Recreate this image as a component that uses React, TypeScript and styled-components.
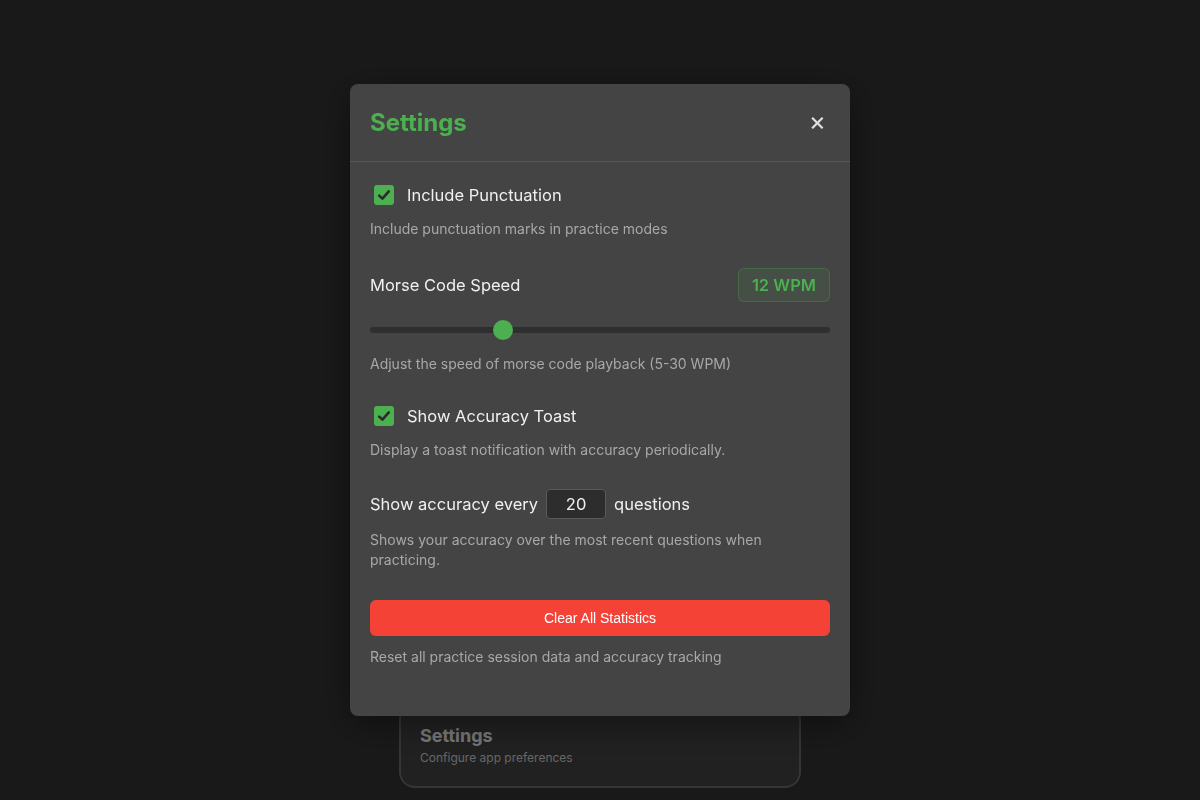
import React from "react";
import styled, { createGlobalStyle } from "styled-components";

const Global = createGlobalStyle`
  html, body { margin: 0; padding: 0; }
  body {
    background: #333333;
    font-family: Inter, "Noto Sans", sans-serif;
    color: #eeeeee;
    width: 1200px;
    height: 800px;
    overflow: hidden;
  }
  * { box-sizing: border-box; }
`;

const Page = styled.div`
  height: 800px;
  display: flex;
  flex-direction: column;
  align-items: center;
  padding-top: 704px;
`;

const MenuCard = styled.div`
  width: 402px;
  background: #424242;
  border: 2px solid #6a6a6a;
  border-radius: 16px;
  padding: 18px 20px 19px 19px;
  display: flex;
  flex-direction: column;
  gap: 1px;
`;

const MenuTitle = styled.div`
  font-size: 18px;
  font-weight: 700;
  line-height: 24px;
  color: #eeeeee;
`;

const MenuSub = styled.div`
  font-size: 12px;
  line-height: 18px;
  color: #cccccc;
`;

const Overlay = styled.div`
  position: fixed;
  inset: 0;
  background: rgba(0, 0, 0, 0.5);
  display: flex;
  justify-content: center;
  align-items: flex-start;
  padding-top: 84px;
`;

const Modal = styled.div`
  width: 500px;
  background: #444444;
  border-radius: 8px;
  box-shadow: 0 8px 32px rgba(0, 0, 0, 0.4);
  display: flex;
  flex-direction: column;
`;

const Header = styled.div`
  display: flex;
  align-items: center;
  justify-content: space-between;
  padding: 20px 20px 19px 20px;
  border-bottom: 1px solid #575757;
`;

const Title = styled.h2`
  margin: 0;
  font-size: 24px;
  line-height: 38px;
  font-weight: 700;
  color: #4caf50;
`;

const CloseButton = styled.button`
  background: none;
  border: none;
  padding: 0 4px 5px 0;
  color: #e0e0e0;
  font-family: Inter, sans-serif;
  font-size: 26px;
  line-height: 26px;
  cursor: pointer;
`;

const Body = styled.div`
  padding: 20px 20px 20px 20px;
  display: flex;
  flex-direction: column;
`;

const Section = styled.div<{ $gapTop?: number }>`
  display: flex;
  flex-direction: column;
  margin-top: ${(p) => p.$gapTop ?? 0}px;
  margin-bottom: 29px;
`;

const CheckRow = styled.label`
  display: flex;
  align-items: center;
  gap: 13px;
  height: 26px;
  padding-left: 4px;
  font-size: 16.5px;
  color: #f0f0f0;
`;

const CheckBox = styled.span`
  width: 20px;
  height: 20px;
  border-radius: 3px;
  background: #4caf50;
  display: flex;
  align-items: center;
  justify-content: center;
`;

const Description = styled.p<{ $top?: number }>`
  margin: ${(p) => p.$top ?? 11}px 0 0 0;
  font-size: 14px;
  line-height: 20px;
  color: #a8a8a8;
`;

const LabelRow = styled.div`
  display: flex;
  align-items: center;
  justify-content: space-between;
`;

const Label = styled.span`
  font-size: 16.5px;
  color: #f0f0f0;
`;

const Badge = styled.span`
  height: 34px;
  padding: 0 13px;
  display: flex;
  align-items: center;
  border-radius: 6px;
  background: rgba(76, 175, 80, 0.1);
  border: 1px solid rgba(76, 175, 80, 0.3);
  color: #4caf50;
  font-size: 16.5px;
  font-weight: 600;
`;

const SliderWrap = styled.div`
  position: relative;
  height: 20px;
  margin-top: 18px;
  display: flex;
  align-items: center;
`;

const Track = styled.div`
  width: 100%;
  height: 6px;
  border-radius: 3px;
  background: #2f2f2f;
`;

const Thumb = styled.div`
  position: absolute;
  top: 0;
  width: 20px;
  height: 20px;
  border-radius: 50%;
  background: #4caf50;
  transform: translateX(-50%);
`;

const InlineRow = styled.div`
  display: flex;
  align-items: center;
  gap: 8px;
  height: 30px;
  font-size: 16.5px;
  color: #f0f0f0;
`;

const NumberBox = styled.div`
  width: 60px;
  height: 30px;
  border: 1px solid #5a5a5a;
  border-radius: 4px;
  background: #2d2d2d;
  display: flex;
  align-items: center;
  justify-content: center;
  font-size: 16.5px;
  color: #f0f0f0;
`;

const DangerButton = styled.button`
  width: 100%;
  height: 36px;
  border: none;
  border-radius: 6px;
  background: #f44336;
  color: #ffffff;
  font-family: "Liberation Sans", Arial, sans-serif;
  font-size: 14px;
  cursor: pointer;
`;

const Check = () => (
  <svg width="16" height="16" viewBox="0 0 16 16" fill="none">
    <path d="M3.2 8.6 L6.4 11.6 L12.8 4.4" stroke="#2b2b2b" strokeWidth="2.6" strokeLinecap="round" strokeLinejoin="round" />
  </svg>
);

export default function App() {
  const speed = 12;
  const frac = (speed - 5) / 25;
  return (
    <>
      <Global />
      <Page>
        <MenuCard>
          <MenuTitle>Settings</MenuTitle>
          <MenuSub>Configure app preferences</MenuSub>
        </MenuCard>
      </Page>
      <Overlay>
        <Modal>
          <Header>
            <Title>Settings</Title>
            <CloseButton aria-label="Close">×</CloseButton>
          </Header>
          <Body>
            <Section>
              <CheckRow>
                <CheckBox><Check /></CheckBox>
                Include Punctuation
              </CheckRow>
              <Description>Include punctuation marks in practice modes</Description>
            </Section>
            <Section>
              <LabelRow>
                <Label>Morse Code Speed</Label>
                <Badge>{speed} WPM</Badge>
              </LabelRow>
              <SliderWrap>
                <Track />
                <Thumb style={{ left: `calc(10px + ${frac} * (100% - 20px))` }} />
              </SliderWrap>
              <Description $top={14}>Adjust the speed of morse code playback (5-30 WPM)</Description>
            </Section>
            <Section>
              <CheckRow>
                <CheckBox><Check /></CheckBox>
                Show Accuracy Toast
              </CheckRow>
              <Description>Display a toast notification with accuracy periodically.</Description>
            </Section>
            <Section>
              <InlineRow>
                <span>Show accuracy every</span>
                <NumberBox>20</NumberBox>
                <span>questions</span>
              </InlineRow>
              <Description>Shows your accuracy over the most recent questions when practicing.</Description>
            </Section>
            <Section $gapTop={1}>
              <DangerButton>Clear All Statistics</DangerButton>
              <Description>Reset all practice session data and accuracy tracking</Description>
            </Section>
          </Body>
        </Modal>
      </Overlay>
    </>
  );
}
